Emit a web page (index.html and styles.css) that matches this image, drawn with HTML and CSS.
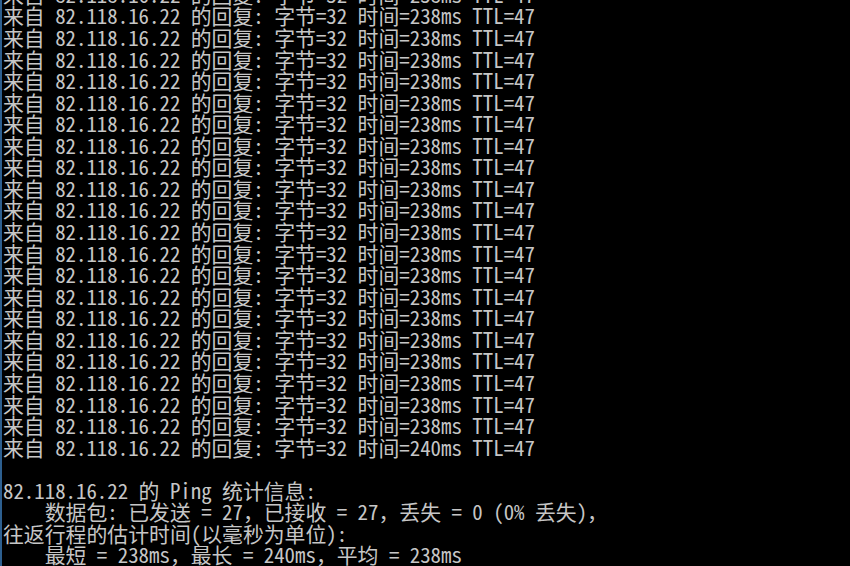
FILE: index.html
```html
<!DOCTYPE html>
<html lang="zh-CN">
<head>
  <meta charset="UTF-8" />
  <title>命令提示符 - ping 82.118.16.22</title>
  <link rel="stylesheet" href="styles.css">
</head>
<body>
  <div class="console">
    <div class="output">
      <div class="line">来自 82.118.16.22 的回复: 字节=32 时间=238ms TTL=47</div>
      <div class="line">来自 82.118.16.22 的回复: 字节=32 时间=238ms TTL=47</div>
      <div class="line">来自 82.118.16.22 的回复: 字节=32 时间=238ms TTL=47</div>
      <div class="line">来自 82.118.16.22 的回复: 字节=32 时间=238ms TTL=47</div>
      <div class="line">来自 82.118.16.22 的回复: 字节=32 时间=238ms TTL=47</div>
      <div class="line">来自 82.118.16.22 的回复: 字节=32 时间=238ms TTL=47</div>
      <div class="line">来自 82.118.16.22 的回复: 字节=32 时间=238ms TTL=47</div>
      <div class="line">来自 82.118.16.22 的回复: 字节=32 时间=238ms TTL=47</div>
      <div class="line">来自 82.118.16.22 的回复: 字节=32 时间=238ms TTL=47</div>
      <div class="line">来自 82.118.16.22 的回复: 字节=32 时间=238ms TTL=47</div>
      <div class="line">来自 82.118.16.22 的回复: 字节=32 时间=238ms TTL=47</div>
      <div class="line">来自 82.118.16.22 的回复: 字节=32 时间=238ms TTL=47</div>
      <div class="line">来自 82.118.16.22 的回复: 字节=32 时间=238ms TTL=47</div>
      <div class="line">来自 82.118.16.22 的回复: 字节=32 时间=238ms TTL=47</div>
      <div class="line">来自 82.118.16.22 的回复: 字节=32 时间=238ms TTL=47</div>
      <div class="line">来自 82.118.16.22 的回复: 字节=32 时间=238ms TTL=47</div>
      <div class="line">来自 82.118.16.22 的回复: 字节=32 时间=238ms TTL=47</div>
      <div class="line">来自 82.118.16.22 的回复: 字节=32 时间=238ms TTL=47</div>
      <div class="line">来自 82.118.16.22 的回复: 字节=32 时间=238ms TTL=47</div>
      <div class="line">来自 82.118.16.22 的回复: 字节=32 时间=238ms TTL=47</div>
      <div class="line">来自 82.118.16.22 的回复: 字节=32 时间=238ms TTL=47</div>
      <div class="line">来自 82.118.16.22 的回复: 字节=32 时间=240ms TTL=47</div>
      <div class="line"> </div>
      <div class="line">82.118.16.22 的 Ping 统计信息:</div>
      <div class="line">    数据包: 已发送 = 27，已接收 = 27，丢失 = 0 (0% 丢失)，</div>
      <div class="line">往返行程的估计时间(以毫秒为单位):</div>
      <div class="line">    最短 = 238ms，最长 = 240ms，平均 = 238ms</div>
    </div>
  </div>
</body>
</html>
```

FILE: styles.css
```css
body {
  margin: 0;
  background: #000;
  overflow: hidden;
}
.console {
  height: 566px;
  display: flex;
  flex-direction: column;
  justify-content: flex-end;
  overflow: hidden;
  border-left: 2px solid #2d5f8f;
  padding-left: 1px;
  background: #000;
  color: #c6c6c6;
  font-family: "Noto Sans Mono CJK SC", "Liberation Mono", "Noto Sans CJK SC", monospace;
  font-size: 20.86px;
  line-height: 21.575px;
}
.line {
  white-space: pre;
  height: 21.575px;
}
```
